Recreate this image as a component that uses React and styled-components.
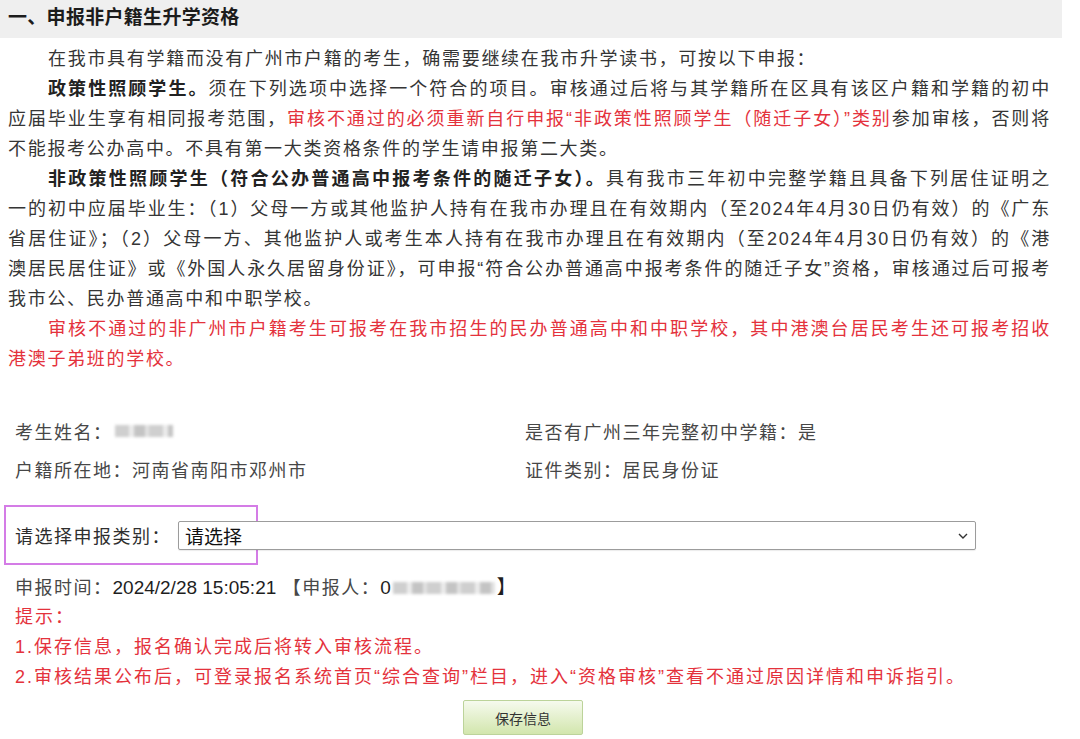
import React from 'react';
import styled, { createGlobalStyle } from 'styled-components';

const RED = '#e4323c';

const GlobalStyle = createGlobalStyle`
  body {
    margin: 0;
    background: #fff;
    font-family: "Liberation Sans", "Noto Sans CJK SC", sans-serif;
  }
`;

const App = () => {
  return (
    <Page lang="zh-CN">
      <GlobalStyle />
      <Header>一、申报非户籍生升学资格</Header>

      <Intro>
        <Line $indent $end>
          在我市具有学籍而没有广州市户籍的考生，确需要继续在我市升学读书，可按以下申报：
        </Line>
        <Line $indent>
          <Strong>政策性照顾学生。</Strong>须在下列选项中选择一个符合的项目。审核通过后将与其学籍所在区具有该区户籍和学籍的初中
        </Line>
        <Line>
          应届毕业生享有相同报考范围，<Red>审核不通过的必须重新自行申报“非政策性照顾学生（随迁子女）”类别</Red>参加审核，否则将
        </Line>
        <Line $end>不能报考公办高中。不具有第一大类资格条件的学生请申报第二大类。</Line>
        <Line $indent>
          <Strong>非政策性照顾学生（符合公办普通高中报考条件的随迁子女）。</Strong>具有我市三年初中完整学籍且具备下列居住证明之
        </Line>
        <Line>
          一的初中应届毕业生：（1）父母一方或其他监护人持有在我市办理且在有效期内（至2024年4月30日仍有效）的《广东
        </Line>
        <Line>
          省居住证》；（2）父母一方、其他监护人或考生本人持有在我市办理且在有效期内（至2024年4月30日仍有效）的《港
        </Line>
        <Line>
          澳居民居住证》或《外国人永久居留身份证》，可申报“符合公办普通高中报考条件的随迁子女”资格，审核通过后可报考
        </Line>
        <Line $end>我市公、民办普通高中和中职学校。</Line>
        <Line $indent $red>
          审核不通过的非广州市户籍考生可报考在我市招生的民办普通高中和中职学校，其中港澳台居民考生还可报考招收
        </Line>
        <Line $red $end>港澳子弟班的学校。</Line>
      </Intro>

      <InfoGrid>
        <Field>
          考生姓名：<Blurred $width={58} />
        </Field>
        <Field>是否有广州三年完整初中学籍：是</Field>
        <Field>户籍所在地：河南省南阳市邓州市</Field>
        <Field>证件类别：居民身份证</Field>
      </InfoGrid>

      <SelectRow>
        <Highlight />
        <SelectLabel>请选择申报类别：</SelectLabel>
        <SelectWrap>
          <Select defaultValue="">
            <option value="">请选择</option>
          </Select>
          <Chevron width="10" height="6" viewBox="0 0 10 6">
            <path d="M1 1l4 4 4-4" fill="none" stroke="#333" strokeWidth="1.4" />
          </Chevron>
        </SelectWrap>
      </SelectRow>

      <Meta>
        申报时间：<Stamp>2024/2/28 15:05:21</Stamp> 【申报人：<Stamp>0</Stamp>
        <Blurred $width={102} />
        <Stamp>】</Stamp>
      </Meta>

      <Tips>
        <Tip>提示：</Tip>
        <Tip>1.保存信息，报名确认完成后将转入审核流程。</Tip>
        <Tip>2.审核结果公布后，可登录报名系统首页“综合查询”栏目，进入“资格审核”查看不通过原因详情和申诉指引。</Tip>
      </Tips>

      <ButtonBar>
        <SaveButton type="button">保存信息</SaveButton>
      </ButtonBar>
    </Page>
  );
};

export default App;

const Page = styled.div`
  width: 1062px;
  padding-bottom: 10px;
`;

const Header = styled.div`
  box-sizing: border-box;
  height: 38px;
  padding: 3px 0 0 8px;
  background: #efefef;
  font-family: "Noto Sans CJK SC", sans-serif;
  font-size: 19px;
  font-weight: 700;
  letter-spacing: 0.3px;
  line-height: 26px;
  color: #1c1c1c;
`;

const Intro = styled.div`
  padding: 6px 11px 0 8px;
`;

const Line = styled.div`
  font-size: 18px;
  letter-spacing: 1.7px;
  line-height: 30px;
  color: ${(p) => (p.$red ? RED : '#353535')};
  text-indent: ${(p) => (p.$indent ? '40px' : '0')};
  text-align: justify;
  text-align-last: ${(p) => (p.$end ? 'left' : 'justify')};
`;

const Strong = styled.span`
  font-weight: 700;
  color: #222;
`;

const Red = styled.span`
  color: ${RED};
`;

const InfoGrid = styled.div`
  display: grid;
  grid-template-columns: 510px 1fr;
  grid-auto-rows: 38px;
  align-items: center;
  margin-top: 38px;
  padding-left: 15px;
`;

const Field = styled.div`
  display: flex;
  align-items: center;
  font-size: 18px;
  letter-spacing: 1.5px;
  color: #474747;
`;

const Blurred = styled.span`
  display: inline-block;
  width: ${(p) => p.$width}px;
  height: 12px;
  margin: 0 2px;
  vertical-align: middle;
  background: repeating-linear-gradient(
    90deg,
    #cfcfcf 0 14px,
    #ececec 14px 19px,
    #c4c4c4 19px 30px,
    #e2e2e2 30px 34px
  );
  filter: blur(1.6px);
`;

const SelectRow = styled.div`
  position: relative;
  display: flex;
  align-items: center;
  height: 60px;
  margin-top: 17px;
  padding-left: 15px;
`;

const Highlight = styled.div`
  position: absolute;
  left: 4px;
  top: 0;
  box-sizing: border-box;
  width: 254px;
  height: 60px;
  border: 2px solid #d47ce6;
  pointer-events: none;
`;

const SelectLabel = styled.span`
  font-size: 18px;
  letter-spacing: 1.5px;
  color: #2e2e2e;
`;

const SelectWrap = styled.div`
  position: relative;
  width: 798px;
  margin-left: 7px;
`;

const Select = styled.select`
  appearance: none;
  box-sizing: border-box;
  width: 100%;
  height: 29px;
  padding: 0 6px;
  border: 1px solid #9c9c9c;
  border-radius: 2px;
  background: #fff;
  box-shadow: 0 1px 1px rgba(0, 0, 0, 0.08);
  font-family: "Noto Sans CJK SC", sans-serif;
  font-size: 19px;
  color: #111;
`;

const Chevron = styled.svg`
  position: absolute;
  right: 8px;
  top: 12px;
`;

const Meta = styled.div`
  display: flex;
  align-items: center;
  margin-top: 9px;
  padding-left: 15px;
  font-size: 18px;
  letter-spacing: 1.5px;
  line-height: 28px;
  color: #474747;
  white-space: pre;
`;

const Stamp = styled.span`
  font-size: 19px;
  letter-spacing: 0;
  color: #1e1e1e;
`;

const Tips = styled.div`
  padding-left: 15px;
`;

const Tip = styled.div`
  font-size: 18px;
  letter-spacing: 2px;
  line-height: 30px;
  color: ${RED};
`;

const ButtonBar = styled.div`
  display: flex;
  justify-content: center;
  margin-top: 8px;
  padding-right: 16px;
`;

const SaveButton = styled.button`
  width: 120px;
  height: 35px;
  border: 1px solid #bcd39a;
  border-radius: 2px;
  background: linear-gradient(#f6faee, #d2e6ad);
  font-family: "Noto Sans CJK SC", sans-serif;
  font-size: 14px;
  color: #333;
  cursor: pointer;
`;
